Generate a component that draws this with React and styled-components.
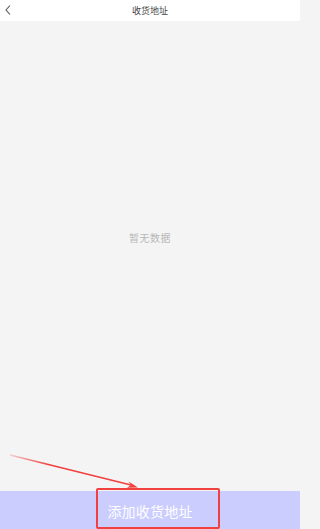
import styled, { createGlobalStyle } from 'styled-components'

const GlobalStyle = createGlobalStyle`
  html, body {
    margin: 0;
    padding: 0;
    background: #f4f4f4;
  }
  * {
    box-sizing: border-box;
  }
`;

const Page = styled.div`
  position: relative;
  width: 300px;
  height: 529px;
  display: flex;
  flex-direction: column;
  font-family: "Noto Sans CJK SC", "Liberation Sans", sans-serif;
  overflow: hidden;
`;

const Header = styled.div`
  height: 21px;
  background-color: #fff;
  display: flex;
  align-items: center;
  justify-content: center;
  position: relative;
`;

const Back = styled.div`
  position: absolute;
  left: 4px;
  top: 4px;
  width: 8px;
  height: 12px;
  display: flex;
`;

const Title = styled.div`
  font-size: 9px;
  color: #444;
  line-height: 1;
`;

const Body = styled.div`
  flex: 1;
  background-color: #f4f4f4;
  display: flex;
  align-items: center;
  justify-content: center;
  padding-bottom: 38px;
`;

const Empty = styled.div`
  font-size: 10px;
  color: #b8b8b8;
  letter-spacing: 0.5px;
`;

const Footer = styled.div`
  height: 38px;
  background-color: #cccdff;
  display: flex;
  align-items: center;
  justify-content: center;
`;

const AddText = styled.div`
  font-size: 14px;
  color: #fff;
  letter-spacing: 0.2px;
  padding-top: 1px;
`;

const Highlight = styled.div`
  position: absolute;
  left: 96px;
  top: 488px;
  width: 124px;
  height: 41px;
  border: 2px solid #f04040;
  border-radius: 2px;
`;

const Arrow = styled.svg`
  position: absolute;
  left: 0;
  top: 0;
  pointer-events: none;
`;

export default function App() {
  return (
    <>
      <GlobalStyle />
      <Page>
        <Header>
          <Back>
            <svg width="8" height="12" viewBox="0 0 8 12">
              <path d="M6 1.5 L2 6 L6 10.5" fill="none" stroke="#555" strokeWidth="1.1" />
            </svg>
          </Back>
          <Title>收货地址</Title>
        </Header>
        <Body>
          <Empty>暂无数据</Empty>
        </Body>
        <Footer>
          <AddText>添加收货地址</AddText>
        </Footer>
        <Highlight />
        <Arrow width="300" height="529" viewBox="0 0 300 529">
          <defs>
            <linearGradient id="ag" x1="10" y1="455" x2="137" y2="487" gradientUnits="userSpaceOnUse">
              <stop offset="0" stopColor="#f04040" stopOpacity="0.2" />
              <stop offset="0.3" stopColor="#f04040" stopOpacity="1" />
            </linearGradient>
          </defs>
          <path d="M10 455 L133 485.5" stroke="url(#ag)" strokeWidth="1.6" fill="none" />
          <path d="M138 487.5 L128.5 481.5 L131 485 L127 487.8 Z" fill="#f04040" />
        </Arrow>
      </Page>
    </>
  )
}
